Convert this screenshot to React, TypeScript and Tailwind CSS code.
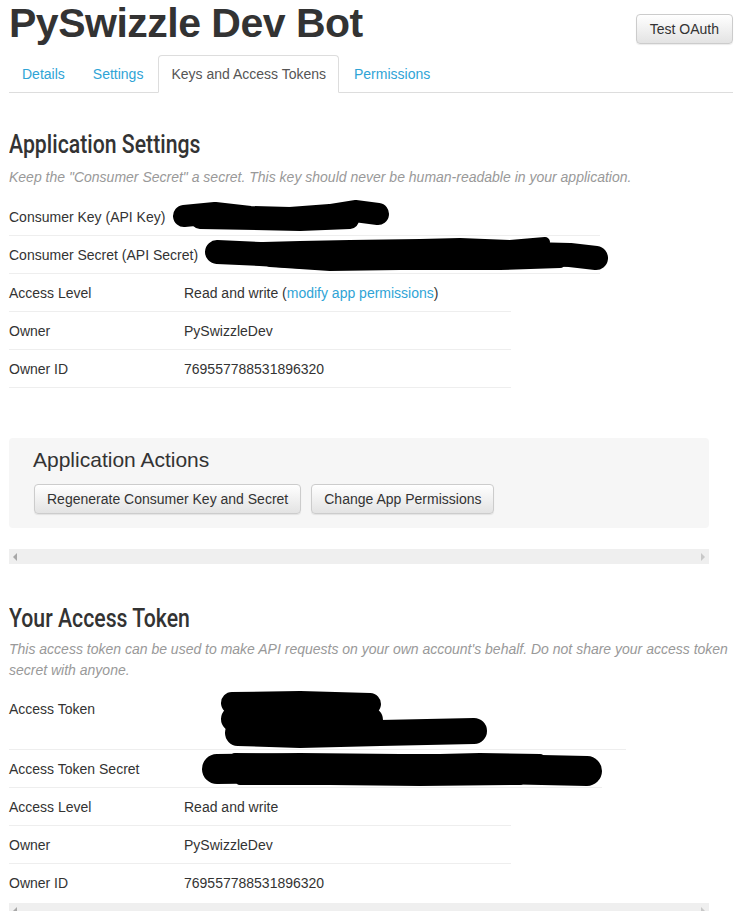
import type { ReactNode } from 'react';

// Thick black marker scribble used to hide the secrets
function Scribble({ lines }: { lines: { pts: string; w: number }[] }) {
  return (
    <svg className="absolute left-[-9px] top-0 pointer-events-none" width="751" height="80" viewBox="0 0 751 80">
      {lines.map((l, i) => (
        <polyline
          key={i}
          points={l.pts}
          fill="none"
          stroke="#000"
          strokeWidth={l.w}
          strokeLinecap="round"
          strokeLinejoin="round"
        />
      ))}
    </svg>
  );
}

function Row({
  label,
  children,
  width,
  tall,
  noBorder,
}: {
  label: string;
  children?: ReactNode;
  width: string;
  tall?: boolean;
  noBorder?: boolean;
}) {
  return (
    <div
      className={`relative flex ${tall ? 'h-[59px] items-start pt-[8px]' : 'h-[38px] items-center'} ${width} ${
        noBorder ? '' : 'border-b border-[#eee]'
      }`}
    >
      <div className="w-[175px] shrink-0 leading-[20px] whitespace-nowrap">{label}</div>
      <div className="leading-[20px] whitespace-nowrap">{children}</div>
    </div>
  );
}

function ScrollBar() {
  return (
    <div className="w-[700px] h-[15px] bg-[#efefef] flex items-center justify-between px-[4px]">
      <span className="w-0 h-0 border-y-[4px] border-y-transparent border-r-[4px] border-r-[#a8a8a8]" />
      <span className="w-0 h-0 border-y-[4px] border-y-transparent border-l-[4px] border-l-[#c8c8c8]" />
    </div>
  );
}

function Heading({ children, className }: { children: ReactNode; className: string }) {
  return (
    <h2 className={`h-[28px] ${className}`}>
      <span
        className="inline-block origin-left scale-x-[0.85] text-[25px] font-medium leading-[28px] text-[#333] whitespace-nowrap"
        style={{ fontFamily: "Roboto, 'Liberation Sans', sans-serif" }}
      >
        {children}
      </span>
    </h2>
  );
}

const btn =
  'h-[30px] px-[12px] text-[14px] text-[#333] border border-[#ccc] rounded-[4px] bg-gradient-to-b from-white to-[#e3e3e3] shadow-[inset_0_1px_0_rgba(255,255,255,0.8),0_1px_1px_rgba(0,0,0,0.08)]';

const TABS = ['Details', 'Settings', 'Keys and Access Tokens', 'Permissions'];

export default function App() {
  return (
    <div
      className="w-[751px] h-[911px] overflow-hidden bg-white text-[14px] text-[#333]"
      style={{ fontFamily: "'Liberation Sans', Arial, sans-serif" }}
    >
      <div className="ml-[9px] w-[724px]">
        {/* Header */}
        <div className="flex justify-between items-start">
          <h1 className="text-[41px] font-bold leading-[46px] text-[#333] tracking-[-0.5px]">PySwizzle Dev Bot</h1>
          <button className={`${btn} mt-[14px] px-[13px]`}>Test OAuth</button>
        </div>

        {/* Tabs */}
        <div className="flex mt-[9px] border-b border-[#ddd] h-[38px]">
          {TABS.map((t) => {
            const active = t === 'Keys and Access Tokens';
            return (
              <div
                key={t}
                className={`mr-[2px] px-[12px] h-[38px] leading-[37px] rounded-t-[4px] ${
                  active
                    ? 'border border-[#ddd] border-b-white bg-white text-[#555]'
                    : 'border border-transparent text-[#2fa4d6]'
                }`}
              >
                {t}
              </div>
            );
          })}
        </div>

        {/* Application Settings */}
        <Heading className="mt-[38px]">Application Settings</Heading>
        <p className="mt-[8px] italic text-[#999] leading-[20px]">
          Keep the "Consumer Secret" a secret. This key should never be human-readable in your application.
        </p>

        <div className="mt-[11px]">
          <Row label="Consumer Key (API Key)" width="w-[591px]">
            <Scribble
              lines={[
                { pts: '184,18 215,15 250,19 290,20 330,17 355,13 378,16', w: 22 },
                { pts: '200,22 300,24 350,22', w: 18 },
              ]}
            />
          </Row>
          <Row label="Consumer Secret (API Secret)" width="w-[591px]">
            <Scribble
              lines={[
                { pts: '217,16 260,18 310,21 360,21 420,19 480,20 530,18 570,19 596,22', w: 24 },
                { pts: '230,12 300,10 350,9 420,8 460,7 510,9 545,6', w: 10 },
                { pts: '270,26 330,30 400,29 500,29 560,27', w: 10 },
              ]}
            />
          </Row>
          <Row label="Access Level" width="w-[502px]">
            Read and write (<span className="text-[#2fa4d6]">modify app permissions</span>)
          </Row>
          <Row label="Owner" width="w-[502px]">
            PySwizzleDev
          </Row>
          <Row label="Owner ID" width="w-[502px]">
            769557788531896320
          </Row>
        </div>

        {/* Application Actions */}
        <div className="mt-[50px] w-[700px] bg-[#f6f6f6] rounded-[4px] pl-[24px] pt-[11px] pb-[14px]">
          <h3 className="text-[21px] leading-[22px] text-[#333]">Application Actions</h3>
          <div className="mt-[13px] flex gap-[10px] ml-[1px]">
            <button className={btn}>Regenerate Consumer Key and Secret</button>
            <button className={btn}>Change App Permissions</button>
          </div>
        </div>

        <div className="mt-[21px]">
          <ScrollBar />
        </div>

        {/* Your Access Token */}
        <Heading className="mt-[41px]">Your Access Token</Heading>
        <p className="mt-[6px] italic text-[#999] leading-[21px]">
          This access token can be used to make API requests on your own account's behalf. Do not share your access token
          secret with anyone.
        </p>

        <div className="mt-[10px]">
          <Row label="Access Token" width="w-[617px]" tall>
            <Scribble
              lines={[
                { pts: '232,12 300,11 370,13', w: 22 },
                { pts: '234,28 300,29 370,29', w: 26 },
                { pts: '238,42 300,44 380,42 474,40', w: 26 },
              ]}
            />
          </Row>
          <Row label="Access Token Secret" width="w-[593px]">
            <Scribble
              lines={[
                { pts: '217,19 300,18 400,19 500,19 587,21', w: 30 },
                { pts: '235,7 300,8 400,9 480,7 540,8', w: 8 },
                { pts: '240,31 330,31 420,32 520,31', w: 8 },
              ]}
            />
          </Row>
          <Row label="Access Level" width="w-[502px]">
            Read and write
          </Row>
          <Row label="Owner" width="w-[502px]">
            PySwizzleDev
          </Row>
          <Row label="Owner ID" width="w-[502px]" noBorder>
            769557788531896320
          </Row>
        </div>

        <div className="mt-[1px]">
          <ScrollBar />
        </div>
      </div>
    </div>
  );
}
